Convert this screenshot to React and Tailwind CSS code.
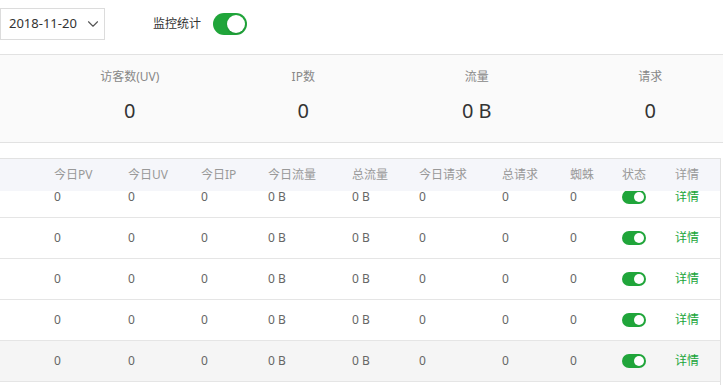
import React from 'react';
import { ChevronDown } from 'lucide-react';

const stats = [
  { label: '访客数(UV)', value: '0' },
  { label: 'IP数', value: '0' },
  { label: '流量', value: '0 B' },
  { label: '请求', value: '0' },
];

const headers = ['今日PV', '今日UV', '今日IP', '今日流量', '总流量', '今日请求', '总请求', '蜘蛛', '状态', '详情'];

const rows = [0, 1, 2, 3, 4].map(i => ({
  id: i,
  cells: ['0', '0', '0', '0 B', '0 B', '0', '0', '0'],
}));

const cols = 'grid grid-cols-[74px_73px_67px_84px_67px_83px_68px_52px_53px_1fr] pl-[54px]';

function Switch({ big }) {
  if (big) {
    return (
      <div className="w-[34px] h-[22px] rounded-full bg-[#20a53a] flex items-center justify-end pr-[2px]">
        <div className="w-[18px] h-[18px] rounded-full bg-white shadow-sm"></div>
      </div>
    );
  }
  return (
    <div className="w-[24px] h-[14px] rounded-full bg-[#20a53a] flex items-center justify-end pr-[2px]">
      <div className="w-[10px] h-[10px] rounded-full bg-white"></div>
    </div>
  );
}

export default function App() {
  return (
    <div className="w-[723px] h-[385px] overflow-hidden bg-white font-['Noto_Sans','Noto_Sans_CJK_SC',sans-serif]">
      <div className="h-[48px] flex items-center">
        <div className="w-[105px] h-[32px] border border-[#dcdcdc] flex items-center justify-between pl-[8px] pr-[2px] text-[13px] text-[#333]">
          <span>2018-11-20</span>
          <ChevronDown size={18} strokeWidth={1.5} className="text-[#555]" />
        </div>
        <span className="ml-[48px] text-[12px] text-[#333]">监控统计</span>
        <div className="ml-[12px]">
          <Switch big />
        </div>
      </div>

      <div className="mt-[6px] h-[89px] border-y border-[#e2e2e2] bg-[#fafafa] pl-[43px]">
        <div className="grid grid-cols-4 w-[694px] pt-[14px]">
          {stats.map(s => (
            <div key={s.label} className="flex flex-col items-center">
              <span className="text-[12px] leading-[16px] text-[#888]">{s.label}</span>
              <span className="mt-[14px] text-[20px] leading-[24px] text-[#333]">{s.value}</span>
            </div>
          ))}
        </div>
      </div>

      <div className="mt-[15px] w-[721px] border-t border-r border-[#e2e2e2]">
        <div className={`${cols} h-[32px] items-center bg-[#f5f6fa] text-[12px] text-[#999]`}>
          {headers.map(h => (
            <span key={h}>{h}</span>
          ))}
        </div>
        <div className="h-[200px] overflow-hidden">
          <div className="-mt-[14px]">
            {rows.map(r => (
              <div
                key={r.id}
                className={`${cols} h-[41px] items-center border-b border-[#e5e5e5] text-[12px] text-[#666] ${r.id === 4 ? 'bg-[#f5f5f5]' : 'bg-white'}`}
              >
                {r.cells.map((c, j) => (
                  <span key={j}>{c}</span>
                ))}
                <span><Switch /></span>
                <span className="text-[#20a53a] text-[12px]">详情</span>
              </div>
            ))}
          </div>
        </div>
      </div>
    </div>
  );
}
